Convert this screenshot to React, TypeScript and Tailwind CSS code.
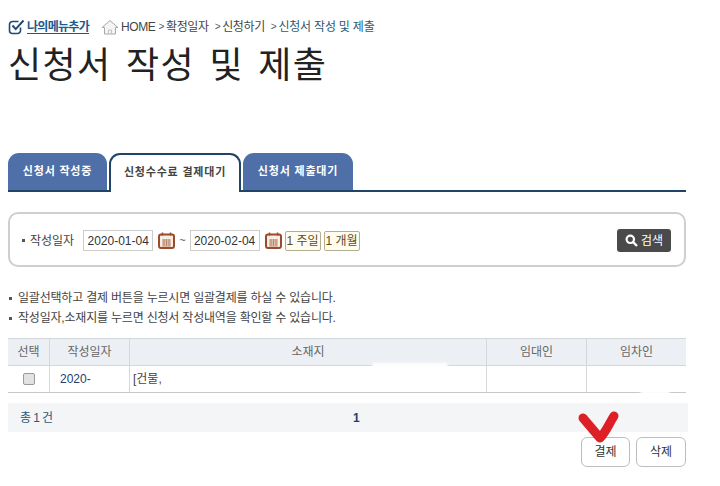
const font = "font-['Liberation_Sans','Noto_Sans_CJK_KR',sans-serif]";

const CheckBadge = () => (
  <svg width="17" height="16" viewBox="0 0 17 16" fill="none" className="shrink-0">
    <path d="M12.5 8.5v3a3 3 0 0 1-3 3h-5a3 3 0 0 1-3-3v-6a3 3 0 0 1 3-3h6" stroke="#1f4a78" strokeWidth="1.6" />
    <path d="M4.5 6.5l3.2 3.6L15.5 1.5" stroke="#1f4a78" strokeWidth="2" />
  </svg>
);

const HomeIcon = () => (
  <svg width="18" height="16" viewBox="0 0 18 16" fill="none" className="shrink-0">
    <path d="M1 8.5L9 1.5l8 7h-2.500v6.500h-11V8.500z" fill="#f4f4f4" stroke="#a9a9a9" strokeWidth="1" />
    <path d="M7.500 15v-4h3v4" stroke="#c4c4c4" strokeWidth="1" />
  </svg>
);

const CalendarIcon = () => (
  <svg width="17" height="17" viewBox="0 0 17 17" fill="none" className="shrink-0">
    <rect x="1" y="2.500" width="15" height="13.500" rx="2" fill="#f7eee2" stroke="#9c4a2c" strokeWidth="2" />
    <path d="M4.500 0.500v3M12.500 0.500v3" stroke="#9c4a2c" strokeWidth="1.500" />
    <path d="M4 8h9M4 10h9M4 12h9M4 14h9M6 7v7M8.500 7v7M11 7v7" stroke="#a8674c" strokeWidth="0.700" />
  </svg>
);

const SearchIcon = () => (
  <svg width="13" height="13" viewBox="0 0 13 13" fill="none" className="shrink-0">
    <circle cx="5.300" cy="5.300" r="3.700" stroke="#fff" strokeWidth="2.200" />
    <path d="M8 8l4 4" stroke="#fff" strokeWidth="2.400" />
  </svg>
);

const Bullet = () => <span className="w-[3px] h-[3px] bg-[#555] shrink-0" />;

const Crumb = ({ children }: { children: React.ReactNode }) => (
  <span className="flex items-center">
    <span className="text-[#555] mr-[2px] text-[10px] font-['Liberation_Mono',monospace]">&gt;</span>
    {children}
  </span>
);

const Input = ({ value }: { value: string }) => (
  <span className="w-[70px] h-[21px] border border-[#ccc] flex items-center justify-center text-[12px] text-[#333] bg-white">
    {value}
  </span>
);

const PeriodButton = ({ label }: { label: string }) => (
  <span className="w-[36px] h-[20px] border border-[#b5ae8e] rounded-[2px] bg-[#fffdf0] flex items-center justify-center text-[12px] text-[#5c4a1e]">
    {label}
  </span>
);

const Tab = ({ label, active, width }: { label: string; active?: boolean; width: string }) =>
  active ? (
    <div
      className={`${width} h-[39px] -mb-[2px] pb-[2px] bg-white border-2 border-b-0 border-[#1f4468] rounded-t-[11px] flex items-center justify-center text-[11px] font-bold text-[#444] tracking-[0.8px]`}
    >
      {label}
    </div>
  ) : (
    <div
      className={`${width} h-[37px] bg-[#4f6fa8] rounded-t-[11px] flex items-center justify-center text-[11px] font-bold text-white tracking-[0.8px]`}
    >
      {label}
    </div>
  );

const columns = [
  { label: "선택", width: "w-[42px]" },
  { label: "작성일자", width: "w-[80px]" },
  { label: "소재지", width: "w-[357px]" },
  { label: "임대인", width: "w-[100px]" },
  { label: "임차인", width: "w-[99px]" },
];

export default function App() {
  return (
    <div className={`${font} w-[720px] h-[486px] overflow-hidden bg-white relative pl-[8px] pt-[17px]`}>
      {/* breadcrumb */}
      <div className="flex items-center h-[20px] text-[12px] text-[#444] tracking-[-0.4px]">
        <CheckBadge />
        <span className="ml-[2px] font-bold text-[#1f5a8c] underline underline-offset-2 text-[12px] tracking-[-0.7px]">
          나의메뉴추가
        </span>
        <span className="ml-[12px] mr-[2px]">
          <HomeIcon />
        </span>
        <span className="mr-[3px]">HOME</span>
        <span className="flex items-center gap-[6px]">
          <Crumb>확정일자</Crumb>
          <Crumb>신청하기</Crumb>
          <Crumb>
            <span className="text-[#2b5a70] tracking-[-0.2px]">신청서 작성 및 제출</span>
          </Crumb>
        </span>
      </div>

      <h1 className="mt-[8px] h-[42px] leading-[42px] text-[36px] font-normal text-[#222] tracking-[1.4px] [word-spacing:3px]">
        신청서 작성 및 제출
      </h1>

      {/* tabs */}
      <div className="mt-[66px] w-[678px] h-[37px] border-b-2 border-[#1f4468] box-content flex items-end gap-[2px]">
        <Tab label="신청서 작성중" width="w-[99px]" />
        <Tab label="신청수수료 결제대기" width="w-[132px]" active />
        <Tab label="신청서 제출대기" width="w-[110px]" />
      </div>

      {/* search box */}
      <div className="mt-[20px] w-[678px] h-[55px] border-2 border-[#cfcfcf] rounded-[10px] flex items-center pt-[2px] pl-[12px] pr-[13px]">
        <Bullet />
        <span className="ml-[5px] mr-[9px] text-[12px] text-[#444]">작성일자</span>
        <Input value="2020-01-04" />
        <span className="ml-[5px]">
          <CalendarIcon />
        </span>
        <span className="mx-[4px] text-[11px] text-[#555]">~</span>
        <Input value="2020-02-04" />
        <span className="ml-[5px]">
          <CalendarIcon />
        </span>
        <span className="ml-[3px]">
          <PeriodButton label="1 주일" />
        </span>
        <span className="ml-[3px]">
          <PeriodButton label="1 개월" />
        </span>
        <span className="ml-auto w-[54px] h-[23px] bg-[#4a4a4a] rounded-[3px] flex items-center justify-center gap-[3px] text-[12px] text-white">
          <SearchIcon />
          검색
        </span>
      </div>

      {/* notes */}
      <ul className="mt-[24px] flex flex-col gap-[6px] text-[12px] leading-[14px] text-[#444] tracking-[-0.2px]">
        <li className="flex items-center gap-[6px] pl-[1px]">
          <Bullet />
          일괄선택하고 결제 버튼을 누르시면 일괄결제를 하실 수 있습니다.
        </li>
        <li className="flex items-center gap-[6px] pl-[1px]">
          <Bullet />
          작성일자,소재지를 누르면 신청서 작성내역을 확인할 수 있습니다.
        </li>
      </ul>

      {/* table */}
      <div className="mt-[13px] w-[678px] border-y border-[#d4d8dc]">
        <div className="flex h-[27px] bg-[#ecf0f4] border-b border-[#d4d8dc]">
          {columns.map((c) => (
            <div
              key={c.label}
              className={`${c.width} flex items-center justify-center text-[12px] text-[#666] border-r border-[#d4d8dc] last:border-r-0`}
            >
              {c.label}
            </div>
          ))}
        </div>
        <div className="flex h-[26px] border-b border-[#c8c8c8] -mb-[1px] box-content">
          <div className="w-[42px] flex items-center justify-center border-r border-[#d4d8dc]">
            <span className="w-[12px] h-[12px] rounded-[2px] border border-[#9a9a9a] bg-[#e2e2e2]" />
          </div>
          <div className="w-[80px] flex items-center pl-[10px] text-[12px] text-[#24406a] border-r border-[#d4d8dc]">
            2020-
          </div>
          <div className="w-[357px] flex items-center pl-[3px] text-[12px] text-[#444] border-r border-[#d4d8dc]">
            [건물,
          </div>
          <div className="w-[100px] border-r border-[#d4d8dc]" />
          <div className="w-[99px]" />
        </div>
      </div>

      {/* pager */}
      <div className="mt-[10px] w-[680px] h-[29px] bg-[#f4f5f7] flex items-center pl-[12px] text-[12px] text-[#1f5a7c] tracking-[-0.6px] relative">
        <span>총 1 건</span>
        <span className="absolute left-[345px] font-bold text-[#24406a]">1</span>
      </div>

      {/* actions */}
      <div className="mt-[5px] w-[678px] flex justify-end gap-[6px]">
        <span className="w-[49px] h-[30px] border border-[#bdbdbd] rounded-[6px] flex items-center justify-center text-[12px] text-[#333]">
          결제
        </span>
        <span className="w-[50px] h-[30px] border border-[#bdbdbd] rounded-[6px] flex items-center justify-center text-[12px] text-[#333]">
          삭제
        </span>
      </div>

      {/* retouched spots in the capture */}
      <span className="absolute left-[372px] top-[363px] w-[76px] h-[4px] bg-white rounded-full blur-[1px]" />
      <span className="absolute left-[640px] top-[390px] w-[30px] h-[4px] bg-white rounded-full blur-[1px]" />

      {/* hand-drawn check */}
      <svg className="absolute left-[576px] top-[408px]" width="46" height="38" viewBox="0 0 46 38" fill="none">
        <path
          d="M7 10L24 30C30 24 34 14 38 8"
          stroke="#dd1f26"
          strokeWidth="9"
          strokeLinecap="round"
          strokeLinejoin="round"
        />
      </svg>
    </div>
  );
}
